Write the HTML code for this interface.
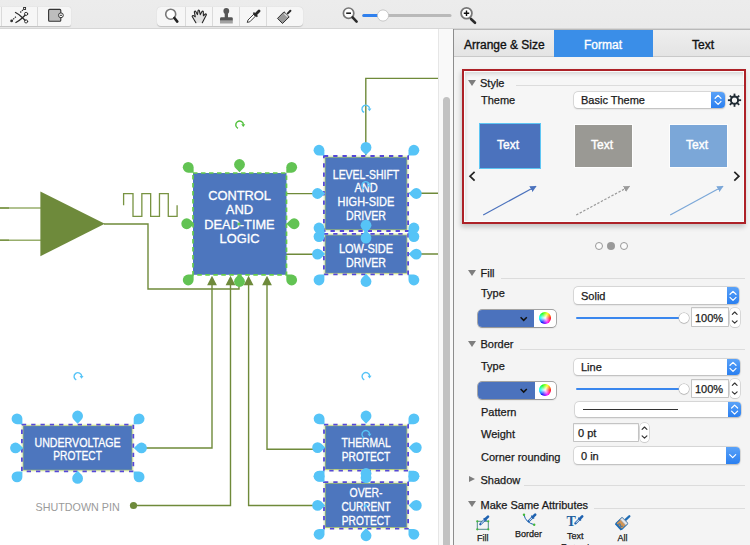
<!DOCTYPE html>
<html><head><meta charset="utf-8">
<style>
*{box-sizing:border-box;margin:0;padding:0}
html,body{width:750px;height:545px;overflow:hidden;background:#fff;font-family:"Liberation Sans",sans-serif;}
.abs{position:absolute}
#toolbar{position:absolute;left:0;top:0;width:750px;height:29px;background:#ebebeb;border-bottom:1px solid #cfcfcf}
.grp{position:absolute;top:6.5px;height:19px;background:#f6f6f6;border-radius:4px;box-shadow:0 0.5px 1px rgba(0,0,0,.18)}
.sep{position:absolute;top:6.5px;width:1px;height:19px;background:#dadada}
#panel{position:absolute;left:454px;top:29px;width:296px;height:516px;background:#f4f4f4}
.lbl{position:absolute;font-size:11px;color:#1a1a1a;white-space:nowrap;line-height:13px;-webkit-text-stroke:0.25px currentColor}
.tri{position:absolute;width:0;height:0;border-left:4.2px solid transparent;border-right:4.2px solid transparent;border-top:6.6px solid #7e7e7e}
.rule{position:absolute;height:1px;background:#dcdcdc}
.dd{position:absolute;background:#fff;border-radius:4px;box-shadow:0 0 0 0.5px #c4c4c4,0 0.5px 1.5px rgba(0,0,0,.25)}
.ddb{position:absolute;right:0;top:0;bottom:0;background:linear-gradient(#5aa2f8,#2a7ff0);border-radius:0 4px 4px 0}
.box{position:absolute;background:#fff;box-shadow:0 0 0 0.8px #b9b9b9,inset 0 1px 1px rgba(0,0,0,.06)}
</style></head><body>

<!-- TOOLBAR -->
<div class="abs" style="left:0;top:0;width:750px;height:29px;background:linear-gradient(#ececec,#eaeaea);border-bottom:1px solid #d6d6d6"></div>
<div class="grp" style="left:-4px;width:75px;border-radius:0 2px 2px 0"></div>
<div class="sep" style="left:1px"></div>
<div class="sep" style="left:37px"></div>
<div class="grp" style="left:157px;width:146px"></div>
<div class="sep" style="left:185px"></div>
<div class="sep" style="left:212px"></div>
<div class="sep" style="left:239px"></div>
<div class="sep" style="left:266px"></div>
<svg class="abs" style="left:0;top:0" width="750" height="29" viewBox="0 0 750 29">
  <!-- connector scissors -->
  <g stroke="#2a2a2a" fill="none" stroke-linecap="round">
    <circle cx="11.6" cy="20.9" r="1.4" fill="#3a3a3a" stroke="none"/>
    <path d="M11.6,20.9 L16.5,16.1" stroke-width="1.2" stroke-dasharray="1.4 0.9" stroke-linecap="butt"/>
    <path d="M20.3,12.5 L23.6,9.2" stroke-width="1.2" stroke-dasharray="1.4 0.9" stroke-linecap="butt"/>
    <rect x="23.6" y="7.5" width="2" height="2" stroke-width="0.9"/>
    <path d="M15.5,12.5 Q19.5,14.5 22.5,17.7 L25,20.2" stroke-width="1.3"/>
    <path d="M15.9,22.5 Q19.5,20.5 22.5,17.7 L25,15.3" stroke-width="1.3"/>
    <circle cx="26.1" cy="13.9" r="1.6" stroke-width="0.9"/>
    <circle cx="26.1" cy="21.4" r="1.6" stroke-width="0.9"/>
  </g>
  <!-- shape w/ circle -->
  <rect x="48.6" y="9.4" width="12.2" height="11.8" rx="1" fill="#bdbdbd" stroke="#333" stroke-width="1.1"/>
  <circle cx="60.9" cy="15.3" r="2.4" fill="#fff" stroke="#333" stroke-width="1"/>
  <path d="M59.7,15.3 H62" stroke="#333" stroke-width="1"/>
  <!-- magnifier -->
  <circle cx="170.7" cy="14.2" r="5" fill="#fff" stroke="#787878" stroke-width="1.6"/>
  <path d="M174.4,18 L177.3,21.6" stroke="#222" stroke-width="2.6" stroke-linecap="round"/>
  <!-- hand -->
  <path d="M195.9,22.7 L192.2,16.5 Q192.3,15.2 193.4,15.6 L195.3,16.8 L194.3,11.9 Q194.6,10.7 195.6,11.3 L197.4,14.6 L198.1,10.6 Q198.6,9.6 199.3,10.5 L200.3,14.6 L202,11.5 Q202.8,10.7 203.3,11.6 L203.4,15.8 L205.3,14 Q206.3,13.6 206.4,14.7 L202.3,22.7" fill="#e2e2e2" stroke="#262626" stroke-width="1.1" stroke-linejoin="round" stroke-linecap="round"/>
  <!-- stamp -->
  <circle cx="226.3" cy="11" r="2.9" fill="#565656"/>
  <rect x="224.7" y="12" width="3.3" height="6" fill="#565656"/>
  <path d="M220,20.7 V18.6 Q220,17.2 221.4,17.2 H231.4 Q232.8,17.2 232.8,18.6 V20.7 Z" fill="#555"/>
  <rect x="220" y="20.7" width="12.8" height="2.8" fill="#a2a2a2"/>
  <!-- dropper -->
  <path d="M247.2,22.4 L248,20 L254.6,13.4 L256.4,15.2 L249.8,21.8 Z" fill="#fff" stroke="#2a2a2a" stroke-width="0.9" stroke-linejoin="round"/>
  <path d="M253.4,12.6 L257.4,16.6" stroke="#2a2a2a" stroke-width="1.6"/>
  <path d="M255.3,14.7 L259,11" stroke="#2a2a2a" stroke-width="2.8" stroke-linecap="round"/>
  <!-- brush -->
  <path d="M287.8,13.4 L290.4,10.8" stroke="#2a2a2a" stroke-width="2" stroke-linecap="round"/>
  <path d="M277.5,18.4 L282.5,23.5 L289.2,16.9 L284,11.8 Z" fill="#9a9a9a" stroke="#333" stroke-width="1" stroke-linejoin="round"/>
  <path d="M284.3,13.4 L287.7,16.8" stroke="#dadada" stroke-width="1.4"/>
  <!-- zoom out -->
  <circle cx="348.6" cy="13.2" r="5.2" fill="#fff" stroke="#777" stroke-width="1.7"/>
  <path d="M346.2,13.2 H351" stroke="#111" stroke-width="1.5"/>
  <path d="M352.6,17.4 L356.6,21.6" stroke="#2b2b2b" stroke-width="2.6" stroke-linecap="round"/>
  <!-- slider -->
  <path d="M363.8,15.6 H450" stroke="#b9b9b9" stroke-width="3" stroke-linecap="round"/>
  <path d="M363.8,15.6 H380" stroke="#2f80ee" stroke-width="3" stroke-linecap="round"/>
  <circle cx="383" cy="15.5" r="5.6" fill="#fff" stroke="#bdbdbd" stroke-width="0.8"/>
  <!-- zoom in -->
  <circle cx="466.5" cy="13.2" r="5.4" fill="#fff" stroke="#777" stroke-width="1.8"/>
  <path d="M463.8,13.2 H469.2 M466.5,10.5 V15.9" stroke="#111" stroke-width="1.4"/>
  <path d="M471,19 L475,22.8" stroke="#2b2b2b" stroke-width="2.6" stroke-linecap="round"/>
</svg>

<!-- CANVAS -->
<svg class="abs" style="left:0;top:0" width="439" height="545" viewBox="0 0 439 545">
  <rect x="0" y="29" width="439" height="516" fill="#fff"/>
<path d="M0,208 H41 M0,240.2 H41" fill="none" stroke="#98ae6c" stroke-width="1.4"/>
<path d="M0,208 H9 M0,240.2 H9" fill="none" stroke="#7a9446" stroke-width="1.4"/>
<path d="M40.4,191.5 L40.4,256.2 L104.8,223.8 Z" fill="#6e8a3b"/>
<path d="M104,224 H148 V289 H239 V282" fill="none" stroke="#6f8a3a" stroke-width="1.4"/>
<path d="M123.6,205.3 V193.7 H133 V216.3 H141.85 V193.7 H150.66 V216.3 H159.47 V193.7 H168.28 V216.3 H177.1 V205.3" fill="none" stroke="#789342" stroke-width="1.3"/>
<path d="M286,193.6 H323 M286,254.2 H323 M408,193.3 H439 M408,254 H439 M365.8,156 V78.4 H439" fill="none" stroke="#6f8a3a" stroke-width="1.4"/>
<path d="M212,284 V448 H141 M230.5,284 V505.5 H133.5 M248.6,284 V505.5 H317 M267,284 V449.2 H317" fill="none" stroke="#6f8a3a" stroke-width="1.4"/>
<path d="M212,275.8 L216.9,285.2 L207.1,285.2 Z" fill="#6e8a3b"/>
<path d="M230.5,275.8 L235.4,285.2 L225.6,285.2 Z" fill="#6e8a3b"/>
<path d="M248.6,275.8 L253.5,285.2 L243.7,285.2 Z" fill="#6e8a3b"/>
<path d="M267,275.8 L271.9,285.2 L262.1,285.2 Z" fill="#6e8a3b"/>
<circle cx="133.5" cy="505.5" r="3.6" fill="#6e8a3b"/>
<rect x="193" y="173" width="93.5" height="101.8" fill="#4d76be"/>
<rect x="193" y="173" width="93.5" height="101.8" fill="none" stroke="#66cc4a" stroke-width="1.7" stroke-dasharray="4.5 3.5"/>
<text x="239.5" y="199.5" text-anchor="middle" font-size="12.6" fill="#fff" stroke="#fff" stroke-width="0.3" textLength="62.699999999999996" lengthAdjust="spacingAndGlyphs">CONTROL</text>
<text x="239.5" y="214.4" text-anchor="middle" font-size="12.6" fill="#fff" stroke="#fff" stroke-width="0.3" textLength="27.400000000000002" lengthAdjust="spacingAndGlyphs">AND</text>
<text x="239.5" y="228.9" text-anchor="middle" font-size="12.6" fill="#fff" stroke="#fff" stroke-width="0.3" textLength="70.3" lengthAdjust="spacingAndGlyphs">DEAD-TIME</text>
<text x="239.5" y="243.3" text-anchor="middle" font-size="12.6" fill="#fff" stroke="#fff" stroke-width="0.3" textLength="40.0" lengthAdjust="spacingAndGlyphs">LOGIC</text>
<circle cx="239" cy="224" r="1.6" fill="#62c353"/>
<rect x="324.3" y="156.4" width="83.39999999999998" height="74.19999999999999" fill="#4d76be"/>
<rect x="324.90000000000003" y="157.0" width="82.19999999999997" height="72.99999999999999" fill="none" stroke="#b8d35c" stroke-width="1"/>
<rect x="323.90000000000003" y="156.0" width="84.19999999999997" height="74.99999999999999" fill="none" stroke="#f3f8dc" stroke-width="1.6"/>
<rect x="323.90000000000003" y="156.0" width="84.19999999999997" height="74.99999999999999" fill="none" stroke="#5548d8" stroke-width="1.8" stroke-dasharray="4.3 5"/>
<text x="366.00" y="178.5" text-anchor="middle" font-size="12" fill="#fff" stroke="#fff" stroke-width="0.3" textLength="66.39999999999999" lengthAdjust="spacingAndGlyphs">LEVEL-SHIFT</text>
<text x="366.00" y="192.2" text-anchor="middle" font-size="12" fill="#fff" stroke="#fff" stroke-width="0.3" textLength="23.2" lengthAdjust="spacingAndGlyphs">AND</text>
<text x="366.00" y="206" text-anchor="middle" font-size="12" fill="#fff" stroke="#fff" stroke-width="0.3" textLength="56.8" lengthAdjust="spacingAndGlyphs">HIGH-SIDE</text>
<text x="366.00" y="220.2" text-anchor="middle" font-size="12" fill="#fff" stroke="#fff" stroke-width="0.3" textLength="40.0" lengthAdjust="spacingAndGlyphs">DRIVER</text>
<rect x="324.3" y="234.2" width="83.39999999999998" height="39.80000000000001" fill="#4d76be"/>
<rect x="324.90000000000003" y="234.79999999999998" width="82.19999999999997" height="38.60000000000001" fill="none" stroke="#b8d35c" stroke-width="1"/>
<rect x="323.90000000000003" y="233.79999999999998" width="84.19999999999997" height="40.60000000000001" fill="none" stroke="#f3f8dc" stroke-width="1.6"/>
<rect x="323.90000000000003" y="233.79999999999998" width="84.19999999999997" height="40.60000000000001" fill="none" stroke="#5548d8" stroke-width="1.8" stroke-dasharray="4.3 5"/>
<text x="366.00" y="253" text-anchor="middle" font-size="12" fill="#fff" stroke="#fff" stroke-width="0.3" textLength="54.099999999999994" lengthAdjust="spacingAndGlyphs">LOW-SIDE</text>
<text x="366.00" y="266.6" text-anchor="middle" font-size="12" fill="#fff" stroke="#fff" stroke-width="0.3" textLength="40.0" lengthAdjust="spacingAndGlyphs">DRIVER</text>
<rect x="22.3" y="425" width="110.60000000000001" height="45.89999999999998" fill="#4d76be"/>
<rect x="22.900000000000002" y="425.6" width="109.4" height="44.699999999999974" fill="none" stroke="#b8d35c" stroke-width="1"/>
<rect x="21.900000000000002" y="424.6" width="111.4" height="46.699999999999974" fill="none" stroke="#f3f8dc" stroke-width="1.6"/>
<rect x="21.900000000000002" y="424.6" width="111.4" height="46.699999999999974" fill="none" stroke="#5548d8" stroke-width="1.8" stroke-dasharray="4.3 5"/>
<text x="77.60" y="446.7" text-anchor="middle" font-size="12" fill="#fff" stroke="#fff" stroke-width="0.3" textLength="86.1" lengthAdjust="spacingAndGlyphs">UNDERVOLTAGE</text>
<text x="77.60" y="460.3" text-anchor="middle" font-size="12" fill="#fff" stroke="#fff" stroke-width="0.3" textLength="48.5" lengthAdjust="spacingAndGlyphs">PROTECT</text>
<rect x="324.4" y="425" width="83.30000000000001" height="45.19999999999999" fill="#4d76be"/>
<rect x="325.0" y="425.6" width="82.10000000000001" height="43.999999999999986" fill="none" stroke="#b8d35c" stroke-width="1"/>
<rect x="324.0" y="424.6" width="84.10000000000001" height="45.999999999999986" fill="none" stroke="#f3f8dc" stroke-width="1.6"/>
<rect x="324.0" y="424.6" width="84.10000000000001" height="45.999999999999986" fill="none" stroke="#5548d8" stroke-width="1.8" stroke-dasharray="4.3 5"/>
<text x="366.05" y="446.7" text-anchor="middle" font-size="12" fill="#fff" stroke="#fff" stroke-width="0.3" textLength="49.099999999999994" lengthAdjust="spacingAndGlyphs">THERMAL</text>
<text x="366.05" y="460.5" text-anchor="middle" font-size="12" fill="#fff" stroke="#fff" stroke-width="0.3" textLength="48.5" lengthAdjust="spacingAndGlyphs">PROTECT</text>
<rect x="324.4" y="482.5" width="83.30000000000001" height="45.799999999999955" fill="#4d76be"/>
<rect x="325.0" y="483.1" width="82.10000000000001" height="44.59999999999995" fill="none" stroke="#b8d35c" stroke-width="1"/>
<rect x="324.0" y="482.1" width="84.10000000000001" height="46.59999999999995" fill="none" stroke="#f3f8dc" stroke-width="1.6"/>
<rect x="324.0" y="482.1" width="84.10000000000001" height="46.59999999999995" fill="none" stroke="#5548d8" stroke-width="1.8" stroke-dasharray="4.3 5"/>
<text x="366.05" y="497" text-anchor="middle" font-size="12" fill="#fff" stroke="#fff" stroke-width="0.3" textLength="33.099999999999994" lengthAdjust="spacingAndGlyphs">OVER-</text>
<text x="366.05" y="510.7" text-anchor="middle" font-size="12" fill="#fff" stroke="#fff" stroke-width="0.3" textLength="49.3" lengthAdjust="spacingAndGlyphs">CURRENT</text>
<text x="366.05" y="524.5" text-anchor="middle" font-size="12" fill="#fff" stroke="#fff" stroke-width="0.3" textLength="48.5" lengthAdjust="spacingAndGlyphs">PROTECT</text>
<text x="35.6" y="510.8" font-size="11.6" fill="#9a9a9a" textLength="84.2" lengthAdjust="spacingAndGlyphs">SHUTDOWN PIN</text>
<path transform="translate(188.20,167.30) rotate(0)" d="M5.4,0 L5.4,5.4 L0,5.4 A5.4,5.4 0 1 1 5.4,0 Z" fill="#62c353"/>
<path transform="translate(291.70,167.30) rotate(90)" d="M5.4,0 L5.4,5.4 L0,5.4 A5.4,5.4 0 1 1 5.4,0 Z" fill="#62c353"/>
<path transform="translate(291.70,280.00) rotate(180)" d="M5.4,0 L5.4,5.4 L0,5.4 A5.4,5.4 0 1 1 5.4,0 Z" fill="#62c353"/>
<path transform="translate(188.20,280.00) rotate(270)" d="M5.4,0 L5.4,5.4 L0,5.4 A5.4,5.4 0 1 1 5.4,0 Z" fill="#62c353"/>
<path transform="translate(239.50,164.50) rotate(45)" d="M5.4,0 L5.4,5.4 L0,5.4 A5.4,5.4 0 1 1 5.4,0 Z" fill="#62c353"/>
<path transform="translate(294.10,223.75) rotate(135)" d="M5.4,0 L5.4,5.4 L0,5.4 A5.4,5.4 0 1 1 5.4,0 Z" fill="#62c353"/>
<path transform="translate(239.50,281.50) rotate(225)" d="M5.4,0 L5.4,5.4 L0,5.4 A5.4,5.4 0 1 1 5.4,0 Z" fill="#62c353"/>
<path transform="translate(186.70,223.75) rotate(315)" d="M5.4,0 L5.4,5.4 L0,5.4 A5.4,5.4 0 1 1 5.4,0 Z" fill="#62c353"/>
<path transform="translate(319.00,150.20) rotate(0)" d="M5.4,0 L5.4,5.4 L0,5.4 A5.4,5.4 0 1 1 5.4,0 Z" fill="#56c4f7"/>
<path transform="translate(413.90,150.20) rotate(90)" d="M5.4,0 L5.4,5.4 L0,5.4 A5.4,5.4 0 1 1 5.4,0 Z" fill="#56c4f7"/>
<path transform="translate(413.90,236.60) rotate(180)" d="M5.4,0 L5.4,5.4 L0,5.4 A5.4,5.4 0 1 1 5.4,0 Z" fill="#56c4f7"/>
<path transform="translate(319.00,236.60) rotate(270)" d="M5.4,0 L5.4,5.4 L0,5.4 A5.4,5.4 0 1 1 5.4,0 Z" fill="#56c4f7"/>
<path transform="translate(366.00,147.40) rotate(45)" d="M5.4,0 L5.4,5.4 L0,5.4 A5.4,5.4 0 1 1 5.4,0 Z" fill="#56c4f7"/>
<path transform="translate(416.30,193.50) rotate(135)" d="M5.4,0 L5.4,5.4 L0,5.4 A5.4,5.4 0 1 1 5.4,0 Z" fill="#56c4f7"/>
<path transform="translate(366.00,238.10) rotate(225)" d="M5.4,0 L5.4,5.4 L0,5.4 A5.4,5.4 0 1 1 5.4,0 Z" fill="#56c4f7"/>
<path transform="translate(317.50,193.50) rotate(315)" d="M5.4,0 L5.4,5.4 L0,5.4 A5.4,5.4 0 1 1 5.4,0 Z" fill="#56c4f7"/>
<path transform="translate(319.00,228.00) rotate(0)" d="M5.4,0 L5.4,5.4 L0,5.4 A5.4,5.4 0 1 1 5.4,0 Z" fill="#56c4f7"/>
<path transform="translate(413.90,228.00) rotate(90)" d="M5.4,0 L5.4,5.4 L0,5.4 A5.4,5.4 0 1 1 5.4,0 Z" fill="#56c4f7"/>
<path transform="translate(413.90,280.00) rotate(180)" d="M5.4,0 L5.4,5.4 L0,5.4 A5.4,5.4 0 1 1 5.4,0 Z" fill="#56c4f7"/>
<path transform="translate(319.00,280.00) rotate(270)" d="M5.4,0 L5.4,5.4 L0,5.4 A5.4,5.4 0 1 1 5.4,0 Z" fill="#56c4f7"/>
<path transform="translate(366.00,225.20) rotate(45)" d="M5.4,0 L5.4,5.4 L0,5.4 A5.4,5.4 0 1 1 5.4,0 Z" fill="#56c4f7"/>
<path transform="translate(416.30,254.10) rotate(135)" d="M5.4,0 L5.4,5.4 L0,5.4 A5.4,5.4 0 1 1 5.4,0 Z" fill="#56c4f7"/>
<path transform="translate(366.00,281.50) rotate(225)" d="M5.4,0 L5.4,5.4 L0,5.4 A5.4,5.4 0 1 1 5.4,0 Z" fill="#56c4f7"/>
<path transform="translate(317.50,254.10) rotate(315)" d="M5.4,0 L5.4,5.4 L0,5.4 A5.4,5.4 0 1 1 5.4,0 Z" fill="#56c4f7"/>
<path transform="translate(17.00,418.80) rotate(0)" d="M5.4,0 L5.4,5.4 L0,5.4 A5.4,5.4 0 1 1 5.4,0 Z" fill="#56c4f7"/>
<path transform="translate(139.10,418.80) rotate(90)" d="M5.4,0 L5.4,5.4 L0,5.4 A5.4,5.4 0 1 1 5.4,0 Z" fill="#56c4f7"/>
<path transform="translate(139.10,476.90) rotate(180)" d="M5.4,0 L5.4,5.4 L0,5.4 A5.4,5.4 0 1 1 5.4,0 Z" fill="#56c4f7"/>
<path transform="translate(17.00,476.90) rotate(270)" d="M5.4,0 L5.4,5.4 L0,5.4 A5.4,5.4 0 1 1 5.4,0 Z" fill="#56c4f7"/>
<path transform="translate(77.60,416.00) rotate(45)" d="M5.4,0 L5.4,5.4 L0,5.4 A5.4,5.4 0 1 1 5.4,0 Z" fill="#56c4f7"/>
<path transform="translate(141.50,447.95) rotate(135)" d="M5.4,0 L5.4,5.4 L0,5.4 A5.4,5.4 0 1 1 5.4,0 Z" fill="#56c4f7"/>
<path transform="translate(77.60,478.40) rotate(225)" d="M5.4,0 L5.4,5.4 L0,5.4 A5.4,5.4 0 1 1 5.4,0 Z" fill="#56c4f7"/>
<path transform="translate(15.50,447.95) rotate(315)" d="M5.4,0 L5.4,5.4 L0,5.4 A5.4,5.4 0 1 1 5.4,0 Z" fill="#56c4f7"/>
<path transform="translate(319.10,418.80) rotate(0)" d="M5.4,0 L5.4,5.4 L0,5.4 A5.4,5.4 0 1 1 5.4,0 Z" fill="#56c4f7"/>
<path transform="translate(413.90,418.80) rotate(90)" d="M5.4,0 L5.4,5.4 L0,5.4 A5.4,5.4 0 1 1 5.4,0 Z" fill="#56c4f7"/>
<path transform="translate(413.90,476.20) rotate(180)" d="M5.4,0 L5.4,5.4 L0,5.4 A5.4,5.4 0 1 1 5.4,0 Z" fill="#56c4f7"/>
<path transform="translate(319.10,476.20) rotate(270)" d="M5.4,0 L5.4,5.4 L0,5.4 A5.4,5.4 0 1 1 5.4,0 Z" fill="#56c4f7"/>
<path transform="translate(366.05,416.00) rotate(45)" d="M5.4,0 L5.4,5.4 L0,5.4 A5.4,5.4 0 1 1 5.4,0 Z" fill="#56c4f7"/>
<path transform="translate(416.30,447.60) rotate(135)" d="M5.4,0 L5.4,5.4 L0,5.4 A5.4,5.4 0 1 1 5.4,0 Z" fill="#56c4f7"/>
<path transform="translate(366.05,477.70) rotate(225)" d="M5.4,0 L5.4,5.4 L0,5.4 A5.4,5.4 0 1 1 5.4,0 Z" fill="#56c4f7"/>
<path transform="translate(317.60,447.60) rotate(315)" d="M5.4,0 L5.4,5.4 L0,5.4 A5.4,5.4 0 1 1 5.4,0 Z" fill="#56c4f7"/>
<path transform="translate(319.10,476.30) rotate(0)" d="M5.4,0 L5.4,5.4 L0,5.4 A5.4,5.4 0 1 1 5.4,0 Z" fill="#56c4f7"/>
<path transform="translate(413.90,476.30) rotate(90)" d="M5.4,0 L5.4,5.4 L0,5.4 A5.4,5.4 0 1 1 5.4,0 Z" fill="#56c4f7"/>
<path transform="translate(413.90,534.30) rotate(180)" d="M5.4,0 L5.4,5.4 L0,5.4 A5.4,5.4 0 1 1 5.4,0 Z" fill="#56c4f7"/>
<path transform="translate(319.10,534.30) rotate(270)" d="M5.4,0 L5.4,5.4 L0,5.4 A5.4,5.4 0 1 1 5.4,0 Z" fill="#56c4f7"/>
<path transform="translate(366.05,473.50) rotate(45)" d="M5.4,0 L5.4,5.4 L0,5.4 A5.4,5.4 0 1 1 5.4,0 Z" fill="#56c4f7"/>
<path transform="translate(416.30,505.40) rotate(135)" d="M5.4,0 L5.4,5.4 L0,5.4 A5.4,5.4 0 1 1 5.4,0 Z" fill="#56c4f7"/>
<path transform="translate(366.05,535.80) rotate(225)" d="M5.4,0 L5.4,5.4 L0,5.4 A5.4,5.4 0 1 1 5.4,0 Z" fill="#56c4f7"/>
<path transform="translate(317.60,505.40) rotate(315)" d="M5.4,0 L5.4,5.4 L0,5.4 A5.4,5.4 0 1 1 5.4,0 Z" fill="#56c4f7"/>
<path d="M237.97,128.39 A3.85,3.85 0 1 1 243.44,124.56" fill="none" stroke="#4fbf3a" stroke-width="1.4"/><path d="M241.25,124.30 L245.25,124.30 L243.25,127.10 Z" fill="#4fbf3a"/>
<path d="M364.17,112.49 A3.85,3.85 0 1 1 369.64,108.66" fill="none" stroke="#56c4f7" stroke-width="1.4"/><path d="M367.45,108.40 L371.45,108.40 L369.45,111.20 Z" fill="#56c4f7"/>
<path d="M76.27,379.99 A3.85,3.85 0 1 1 81.74,376.16" fill="none" stroke="#56c4f7" stroke-width="1.4"/><path d="M79.55,375.90 L83.55,375.90 L81.55,378.70 Z" fill="#56c4f7"/>
<path d="M364.27,379.89 A3.85,3.85 0 1 1 369.74,376.06" fill="none" stroke="#56c4f7" stroke-width="1.4"/><path d="M367.55,375.80 L371.55,375.80 L369.55,378.60 Z" fill="#56c4f7"/>
<path d="M364.17,188.99 A3.85,3.85 0 1 1 369.64,185.16" fill="none" stroke="#56c4f7" stroke-width="1.4"/><path d="M367.45,184.90 L371.45,184.90 L369.45,187.70 Z" fill="#56c4f7"/>
<path d="M364.17,437.89 A3.85,3.85 0 1 1 369.64,434.06" fill="none" stroke="#56c4f7" stroke-width="1.4"/><path d="M367.45,433.80 L371.45,433.80 L369.45,436.60 Z" fill="#56c4f7"/>
<circle cx="365.8" cy="505.8" r="1.6" fill="#56c4f7"/>
<circle cx="365.8" cy="231" r="1.6" fill="#56c4f7"/>
</svg>

<!-- SCROLLBAR -->
<div class="abs" style="left:438px;top:29px;width:16px;height:516px;background:#f9f9f9;border-left:1px solid #e6e6e6;border-right:1px solid #8d8d8d"></div>
<div class="abs" style="left:443px;top:97px;width:7px;height:460px;background:#c2c2c2;border-radius:3.5px"></div>

<!-- PANEL -->
<div class="abs" style="left:454px;top:29px;width:296px;height:516px;background:#f4f4f4"></div>
<!-- tabs -->
<div class="abs" style="left:454px;top:29.4px;width:296px;height:27.6px;background:linear-gradient(#eeeeee,#e4e4e4);border-top:1.2px solid #b9b9b9;border-bottom:1px solid #c9c9c9"></div>
<div class="abs" style="left:553.5px;top:30px;width:99.3px;height:27px;background:#3a8ee8"></div>
<div class="lbl" style="left:464px;top:39px;font-size:12px;color:#111;-webkit-text-stroke:0.35px #111">Arrange &amp; Size</div>
<div class="lbl" style="left:584px;top:39px;font-size:12px;color:#fff;-webkit-text-stroke:0.35px #fff">Format</div>
<div class="lbl" style="left:692px;top:39px;font-size:12px;color:#111;-webkit-text-stroke:0.35px #111">Text</div>

<!-- style box -->
<div class="abs" style="left:462px;top:69px;width:284px;height:155px;border:2px solid #ad2127;background:#f6f6f6;box-shadow:inset 0 0 0 1px #fafcfc,inset 1px 3px 4px rgba(0,0,0,.13),-1px 3px 5px rgba(0,0,0,.2)"></div>
<div class="tri" style="left:468px;top:80px"></div>
<div class="lbl" style="left:480px;top:77.0px">Style</div>
<div class="rule" style="left:516px;top:84.5px;width:228px"></div>
<div class="lbl" style="left:481px;top:93.9px">Theme</div>
<div class="dd" style="left:574px;top:91.5px;width:151px;height:16.5px"><div class="ddb" style="width:13.6px"></div></div>
<div class="lbl" style="left:581px;top:93.9px">Basic Theme</div>

<!-- thumbnails -->
<div class="abs" style="left:479.2px;top:123px;width:61.6px;height:45.5px;background:#4b72bd;border:1.5px solid #5ec6f4"></div>
<div class="abs" style="left:574px;top:124px;width:59px;height:44px;background:#9a9994;border:1px solid #fdfdfd"></div>
<div class="abs" style="left:668.5px;top:124px;width:59px;height:44px;background:#7ba7d8;border:1px solid #fdfdfd"></div>
<div class="lbl" style="left:497px;top:139.3px;font-size:12px;color:#fff;-webkit-text-stroke:0.4px #fff">Text</div>
<div class="lbl" style="left:591px;top:139.3px;font-size:12px;color:#fff;-webkit-text-stroke:0.4px #fff">Text</div>
<div class="lbl" style="left:686px;top:139.3px;font-size:12px;color:#fff;-webkit-text-stroke:0.4px #fff">Text</div>

<!-- dots -->
<div class="abs" style="left:595px;top:241.6px;width:8px;height:8px;border:1.2px solid #999;background:#fbfbfb;border-radius:50%"></div>
<div class="abs" style="left:607.4px;top:241.6px;width:8px;height:8px;background:#999;border-radius:50%"></div>
<div class="abs" style="left:619.8px;top:241.6px;width:8px;height:8px;border:1.2px solid #999;background:#fbfbfb;border-radius:50%"></div>

<!-- FILL -->
<div class="tri" style="left:468px;top:270px"></div>
<div class="lbl" style="left:480.5px;top:266.8px">Fill</div>
<div class="rule" style="left:500.5px;top:278px;width:244px"></div>
<div class="lbl" style="left:481px;top:287.0px">Type</div>
<div class="dd" style="left:573.6px;top:287.4px;width:165.8px;height:16.5px"><div class="ddb" style="width:12.8px"></div></div>
<div class="lbl" style="left:581px;top:289.7px">Solid</div>
<div class="abs" style="left:478.2px;top:310px;width:77.6px;height:17px;background:#fff;border-radius:4px;box-shadow:0 0 0 0.7px #8c8c8c,0 0.5px 1.5px rgba(0,0,0,.25)"></div>
<div class="abs" style="left:478.2px;top:310px;width:56.3px;height:17px;background:#4b72bd;border-radius:4px 0 0 4px"></div>
<div class="abs" style="left:576px;top:316.5px;width:108px;height:2.5px;background:#3a87ee;border-radius:1px"></div>
<div class="abs" style="left:678.8px;top:312.5px;width:10.5px;height:10.5px;background:#fff;border-radius:50%;box-shadow:0 0 0 0.5px #b0b0b0,0 0.5px 1px rgba(0,0,0,.3)"></div>
<div class="box" style="left:691.5px;top:308.4px;width:36.3px;height:17.7px"></div>
<div class="lbl" style="left:695px;top:311.7px">100%</div>
<div class="abs" style="left:729.8px;top:308px;width:9.8px;height:19px;background:#fff;border-radius:4px;box-shadow:0 0 0 0.5px #c0c0c0,0 0.5px 1px rgba(0,0,0,.2)"></div>

<!-- BORDER -->
<div class="tri" style="left:468px;top:341px"></div>
<div class="lbl" style="left:480.5px;top:337.9px">Border</div>
<div class="rule" style="left:519.8px;top:349px;width:225px"></div>
<div class="lbl" style="left:481px;top:360.2px">Type</div>
<div class="dd" style="left:573.6px;top:358.6px;width:166px;height:16px"><div class="ddb" style="width:13px"></div></div>
<div class="lbl" style="left:581px;top:360.7px">Line</div>
<div class="abs" style="left:478.2px;top:381.8px;width:77.4px;height:17.2px;background:#fff;border-radius:4px;box-shadow:0 0 0 0.7px #8c8c8c,0 0.5px 1.5px rgba(0,0,0,.25)"></div>
<div class="abs" style="left:478.2px;top:381.8px;width:56.5px;height:17.2px;background:#4b72bd;border-radius:4px 0 0 4px"></div>
<div class="abs" style="left:576px;top:387.5px;width:108px;height:2.5px;background:#3a87ee;border-radius:1px"></div>
<div class="abs" style="left:678.8px;top:383.5px;width:10.5px;height:10.5px;background:#fff;border-radius:50%;box-shadow:0 0 0 0.5px #b0b0b0,0 0.5px 1px rgba(0,0,0,.3)"></div>
<div class="box" style="left:691.5px;top:379.6px;width:36.3px;height:17.8px"></div>
<div class="lbl" style="left:695px;top:382.9px">100%</div>
<div class="abs" style="left:729.8px;top:379px;width:9.8px;height:19px;background:#fff;border-radius:4px;box-shadow:0 0 0 0.5px #c0c0c0,0 0.5px 1px rgba(0,0,0,.2)"></div>
<div class="lbl" style="left:481px;top:406.2px">Pattern</div>
<div class="dd" style="left:575.4px;top:401.8px;width:166px;height:15.3px"><div class="ddb" style="width:13.6px"></div></div>
<div class="abs" style="left:582.8px;top:408.6px;width:95.7px;height:1.2px;background:#333"></div>
<div class="lbl" style="left:481px;top:428.2px">Weight</div>
<div class="box" style="left:574.4px;top:423.5px;width:63.4px;height:17.8px"></div>
<div class="lbl" style="left:578px;top:427.3px">0 pt</div>
<div class="abs" style="left:639.5px;top:423px;width:9.9px;height:19px;background:#fff;border-radius:4px;box-shadow:0 0 0 0.5px #c0c0c0,0 0.5px 1px rgba(0,0,0,.2)"></div>
<div class="lbl" style="left:481px;top:451.3px">Corner rounding</div>
<div class="dd" style="left:573.6px;top:447.4px;width:166px;height:16.6px"><div class="ddb" style="width:13.8px"></div></div>
<div class="lbl" style="left:581px;top:450.3px">0 in</div>

<!-- SHADOW -->
<div class="abs" style="left:468.6px;top:475.6px;width:0;height:0;border-top:3.8px solid transparent;border-bottom:3.8px solid transparent;border-left:6.9px solid #7e7e7e"></div>
<div class="lbl" style="left:480.5px;top:473.5px">Shadow</div>
<div class="rule" style="left:524px;top:485px;width:221px"></div>
<!-- MAKE SAME -->
<div class="tri" style="left:468px;top:501px"></div>
<div class="lbl" style="left:480.5px;top:498.5px">Make Same Attributes</div>
<div class="rule" style="left:594px;top:508px;width:151px"></div>
<div class="lbl" style="left:477px;top:532.3px;font-size:9px">Fill</div>
<div class="lbl" style="left:515px;top:528.4px;font-size:9px">Border</div>
<div class="lbl" style="left:567px;top:529.6px;font-size:9px">Text</div>
<div class="lbl" style="left:561px;top:541.3px;font-size:9px">Format</div>
<div class="lbl" style="left:617.5px;top:531.8px;font-size:9px">All</div>
<!-- PANEL ICONS -->
<svg class="abs" style="left:0;top:0" width="750" height="545" viewBox="0 0 750 545">
  <defs>
    <marker id="ah1" viewBox="0 0 10 10" refX="9" refY="5" markerWidth="5.4" markerHeight="5.4" orient="auto"><path d="M0,0 L10,5 L0,10 Z" fill="#4b72bd"/></marker>
    <marker id="ah2" viewBox="0 0 10 10" refX="9" refY="5" markerWidth="5.4" markerHeight="5.4" orient="auto"><path d="M0,0 L10,5 L0,10 Z" fill="#9a9a9a"/></marker>
    <marker id="ah3" viewBox="0 0 10 10" refX="9" refY="5" markerWidth="5.4" markerHeight="5.4" orient="auto"><path d="M0,0 L10,5 L0,10 Z" fill="#7ba7d8"/></marker>
  </defs>
  <!-- dropdown chevrons (double) -->
  <g fill="none" stroke="#fff" stroke-width="1.2" stroke-linecap="round" stroke-linejoin="round">
    <path d="M715.1,98.3 L718.1,95.4 L721,98.3 M715.1,101.4 L718.1,104.4 L721,101.4"/>
    <path d="M730,294.3 L733,291.4 L736,294.3 M730,297.4 L733,300.4 L736,297.4"/>
    <path d="M730,365.3 L733,362.4 L736,365.3 M730,368.4 L733,371.4 L736,368.4"/>
    <path d="M731.6,408 L734.6,405.1 L737.6,408 M731.6,411.1 L734.6,414.1 L737.6,411.1"/>
    <path d="M729.7,454.6 L732.7,457.6 L735.7,454.6"/>
  </g>
  <!-- gear -->
  <g transform="translate(734.5,100.2)" fill="#1f2a33">
    <path d="M-0.9,-6.6 H0.9 V-3 H-0.9 Z" transform="rotate(0)"/>
    <path d="M-0.9,-6.6 H0.9 V-3 H-0.9 Z" transform="rotate(45)"/>
    <path d="M-0.9,-6.6 H0.9 V-3 H-0.9 Z" transform="rotate(90)"/>
    <path d="M-0.9,-6.6 H0.9 V-3 H-0.9 Z" transform="rotate(135)"/>
    <path d="M-0.9,-6.6 H0.9 V-3 H-0.9 Z" transform="rotate(180)"/>
    <path d="M-0.9,-6.6 H0.9 V-3 H-0.9 Z" transform="rotate(225)"/>
    <path d="M-0.9,-6.6 H0.9 V-3 H-0.9 Z" transform="rotate(270)"/>
    <path d="M-0.9,-6.6 H0.9 V-3 H-0.9 Z" transform="rotate(315)"/>
    <circle r="3.6" fill="none" stroke="#1f2a33" stroke-width="2"/>
  </g>
  <!-- thumb arrows -->
  <path d="M483.2,215 L536,186.3" stroke="#4b72bd" stroke-width="1.2" marker-end="url(#ah1)"/>
  <path d="M576.2,215 L629.5,186.3" stroke="#9a9a9a" stroke-width="1.2" stroke-dasharray="2.4 1.6" marker-end="url(#ah2)"/>
  <path d="M670.2,215 L723,186.3" stroke="#7ba7d8" stroke-width="1.2" marker-end="url(#ah3)"/>
  <!-- carousel chevrons -->
  <path d="M474.6,171.8 L470,176.2 L474.6,180.6" fill="none" stroke="#222" stroke-width="1.7"/>
  <path d="M734.3,171.8 L738.9,176.2 L734.3,180.6" fill="none" stroke="#222" stroke-width="1.7"/>
  <!-- color well chevrons -->
  <path d="M520.6,317.3 L523.7,320.4 L526.8,317.3" fill="none" stroke="#111" stroke-width="1.5"/>
  <path d="M520.6,389 L523.7,392.1 L526.8,389" fill="none" stroke="#111" stroke-width="1.5"/>
  <!-- steppers -->
  <g fill="none" stroke="#333" stroke-width="1.15" stroke-linecap="round" stroke-linejoin="round">
    <path d="M732.3,314.4 L734.7,312 L737.1,314.4 M732.3,320.8 L734.7,323.2 L737.1,320.8"/>
    <path d="M732.3,385.4 L734.7,383 L737.1,385.4 M732.3,391.8 L734.7,394.2 L737.1,391.8"/>
    <path d="M642.1,429.4 L644.5,427 L646.9,429.4 M642.1,435.8 L644.5,438.2 L646.9,435.8"/>
  </g>
  <!-- bottom icons: Fill -->
  <rect x="477.3" y="521.3" width="11" height="8" fill="none" stroke="#4f8a8a" stroke-width="1"/>
  <g fill="#43b83a"><circle cx="477.3" cy="521.3" r="1.1"/><circle cx="488.3" cy="521.3" r="1.1"/><circle cx="477.3" cy="529.3" r="1.1"/><circle cx="488.3" cy="529.3" r="1.1"/></g>
  <path d="M480.30,524.20 L485.07,519.49" stroke="#1f62b0" stroke-width="2.3" stroke-linecap="round"/><path d="M480.94,523.57 L485.07,519.49" stroke="#fff" stroke-width="1"/><path d="M486.48,520.91 L483.67,518.06" stroke="#1f62b0" stroke-width="1.2"/><path d="M485.07,519.49 L488.00,516.60" stroke="#1f62b0" stroke-width="2.6" stroke-linecap="round"/>
  <!-- Border -->
  <path d="M524,514.7 Q525.5,522.5 534.2,524.7" fill="none" stroke="#1f62b0" stroke-width="1"/>
  <circle cx="524" cy="514.7" r="1.2" fill="#43b83a"/><circle cx="534.2" cy="524.7" r="1.2" fill="#43b83a"/>
  <path d="M528.60,521.20 L532.69,517.11" stroke="#1f62b0" stroke-width="2.3" stroke-linecap="round"/><path d="M529.24,520.56 L532.69,517.11" stroke="#fff" stroke-width="1"/><path d="M534.11,518.52 L531.28,515.69" stroke="#1f62b0" stroke-width="1.2"/><path d="M532.69,517.11 L535.20,514.60" stroke="#1f62b0" stroke-width="2.6" stroke-linecap="round"/>
  <!-- Text -->
  <text x="566.5" y="525.6" font-family="Liberation Serif" font-weight="bold" font-size="14" fill="#1e5f9e">T</text>
  <path d="M575.40,523.40 L579.62,519.06" stroke="#1f62b0" stroke-width="2.3" stroke-linecap="round"/><path d="M576.03,522.75 L579.62,519.06" stroke="#fff" stroke-width="1"/><path d="M581.05,520.45 L578.18,517.67" stroke="#1f62b0" stroke-width="1.2"/><path d="M579.62,519.06 L582.20,516.40" stroke="#1f62b0" stroke-width="2.6" stroke-linecap="round"/>
  <!-- All -->
  <g transform="translate(618.4,526.8) rotate(-44)">
    <path d="M9.5,0 H15.2" stroke="#1f6db5" stroke-width="2.3" stroke-linecap="round"/>
    <rect x="0.2" y="-4.2" width="9" height="8.4" rx="0.6" fill="#d39350" stroke="#1f6db5" stroke-width="1"/>
    <rect x="6.3" y="-4" width="2.8" height="8" fill="#e4e6ea" stroke="#8a9aaa" stroke-width="0.6"/>
    <path d="M0.2,-4.2 V4.2" stroke="#1f6db5" stroke-width="2"/>
    <path d="M1.5,-2 L3.3,-1 L1.8,1.2 L3.5,2.6" stroke="#1f6db5" stroke-width="0.8" fill="none"/>
  </g>
</svg>
<div class="abs" style="left:538.5px;top:312px;width:12.2px;height:12.2px;border-radius:50%;background:radial-gradient(circle,#fff 0,rgba(255,255,255,0) 70%),conic-gradient(from 30deg,#ff0,#f00 60deg,#f0f 120deg,#00f 180deg,#0ff 240deg,#0f0 300deg,#ff0 360deg)"></div>
<div class="abs" style="left:538.5px;top:383.6px;width:12.2px;height:12.2px;border-radius:50%;background:radial-gradient(circle,#fff 0,rgba(255,255,255,0) 70%),conic-gradient(from 30deg,#ff0,#f00 60deg,#f0f 120deg,#00f 180deg,#0ff 240deg,#0f0 300deg,#ff0 360deg)"></div>

</body></html>
